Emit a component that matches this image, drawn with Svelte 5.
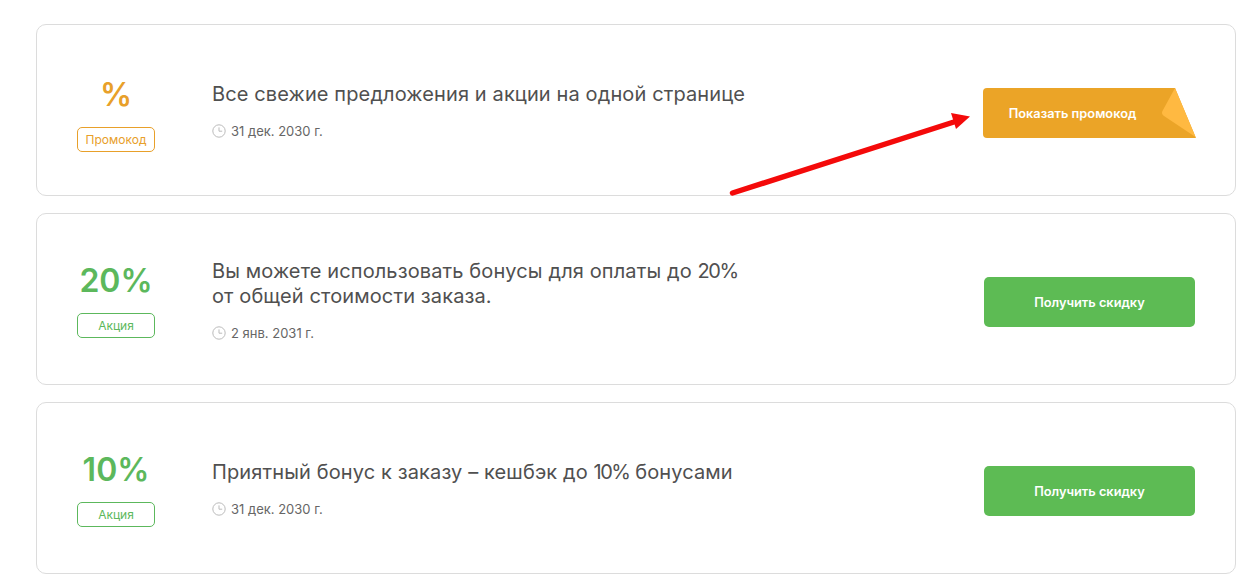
<script lang="ts">
  interface Offer {
    value: string;
    tag: string;
    lines: string[];
    date: string;
    promo: boolean;
  }

  const offers: Offer[] = [
    {
      value: "%",
      tag: "Промокод",
      lines: ["Все свежие предложения и акции на одной странице"],
      date: "31 дек. 2030 г.",
      promo: true
    },
    {
      value: "20%",
      tag: "Акция",
      lines: ["Вы можете использовать бонусы для оплаты до 20%", "от общей стоимости заказа."],
      date: "2 янв. 2031 г.",
      promo: false
    },
    {
      value: "10%",
      tag: "Акция",
      lines: ["Приятный бонус к заказу – кешбэк до 10% бонусами"],
      date: "31 дек. 2030 г.",
      promo: false
    }
  ];

  // percentages inside the titles are set a little tighter
  const parts = (line: string) => line.split(/(\d+%)/);
</script>

<main class="page">
  {#each offers as offer}
    <section class="card" class:promo={offer.promo}>
      <div class="badge">
        <div class="value">{offer.value}</div>
        <div class="tag">{offer.tag}</div>
      </div>
      <div class="info">
        <h3>
          {#each offer.lines as line}
            <span class="line">
              {#each parts(line) as part, i}{#if i % 2}<span class="num">{part}</span>{:else}{part}{/if}{/each}
            </span>
          {/each}
        </h3>
        <div class="date">
          <svg class="clock" viewBox="0 0 14 14" width="14" height="14" aria-hidden="true">
            <circle cx="7" cy="7" r="6.2" />
            <path d="M7 3.4V7.200H10.200" />
          </svg>
          {offer.date}
        </div>
      </div>
      {#if offer.promo}
        <button class="btn btn-promo">
          <svg class="ribbon" viewBox="0 0 213 50" width="213" height="50" aria-hidden="true">
            <path class="ribbon-body" d="M4 0H192L213 50H4Q0 50 0 46V4Q0 0 4 0Z" />
            <path class="ribbon-fold" d="M192 0L212.500 49L181 28Q177.500 25.500 180 22Z" />
          </svg>
          <span>Показать промокод</span>
        </button>
      {:else}
        <button class="btn btn-sale"><span>Получить скидку</span></button>
      {/if}
    </section>
  {/each}

  <!-- annotation drawn on top of the screenshot -->
  <svg class="arrow" viewBox="0 0 250 90" width="250" height="90" aria-hidden="true">
    <path class="arrow-line" d="M3.500 81L228 9" />
    <path class="arrow-head" d="M241 4.500L222 1L227 17Z" />
  </svg>
</main>

<style>
  :global(body) {
    margin: 0;
    background: #fff;
    font-family: Inter, "Noto Sans", sans-serif;
  }

  .page {
    position: relative;
    box-sizing: border-box;
    width: 1252px;
    height: 584px;
    padding: 24px 16px 0 36px;
    display: flex;
    flex-direction: column;
    gap: 17px;
    overflow: hidden;
  }

  .card {
    box-sizing: border-box;
    height: 172px;
    display: flex;
    align-items: center;
    border: 1px solid #dcdcdc;
    border-radius: 10px;
    padding-right: 40px;
    color: #5cb85c;
  }

  .card.promo {
    color: #e8a02a;
  }

  .badge {
    width: 158px;
    flex: none;
    display: flex;
    flex-direction: column;
    align-items: center;
    gap: 10px;
    padding-bottom: 2px;
  }

  .promo .badge {
    padding: 5px 0 0;
  }

  .value {
    font-size: 32px;
    line-height: 44px;
    font-weight: 600;
  }

  .tag {
    box-sizing: border-box;
    width: 78px;
    height: 25px;
    display: flex;
    align-items: center;
    justify-content: center;
    border: 1px solid currentColor;
    border-radius: 5px;
    font-size: 12px;
  }

  .info {
    margin-left: 17px;
    flex: 1;
  }

  h3 {
    margin: 1px 0 16px;
    font-size: 20px;
    line-height: 25px;
    font-weight: 400;
    letter-spacing: 0.12px;
    color: #505050;
  }

  .line {
    display: block;
  }

  .num {
    letter-spacing: -1.5px;
  }

  .date {
    display: flex;
    align-items: center;
    gap: 5px;
    font-size: 13px;
    line-height: 16px;
    color: #666;
  }

  .clock {
    fill: none;
    stroke: #bbb;
    stroke-width: 1;
  }

  .btn {
    position: relative;
    width: 211px;
    height: 50px;
    flex: none;
    margin-top: 6px;
    border: 0;
    border-radius: 5px;
    padding: 0;
    font: 600 12.8px Inter, "Noto Sans", sans-serif;
    color: #fff;
    background: #5dbb54;
  }

  .btn span {
    position: relative;
  }

  .btn-promo {
    width: 213px;
    margin-right: -1px;
    padding-right: 34px;
    background: none;
  }

  .ribbon {
    position: absolute;
    left: 0;
    top: 0;
  }

  .ribbon-body {
    fill: #eba427;
  }

  .ribbon-fold {
    fill: #ffb941;
  }

  .arrow {
    position: absolute;
    left: 729px;
    top: 112px;
  }

  .arrow-line {
    fill: none;
    stroke: #f40a0a;
    stroke-width: 5.5;
    stroke-linecap: round;
  }

  .arrow-head {
    fill: #f40a0a;
  }
</style>
